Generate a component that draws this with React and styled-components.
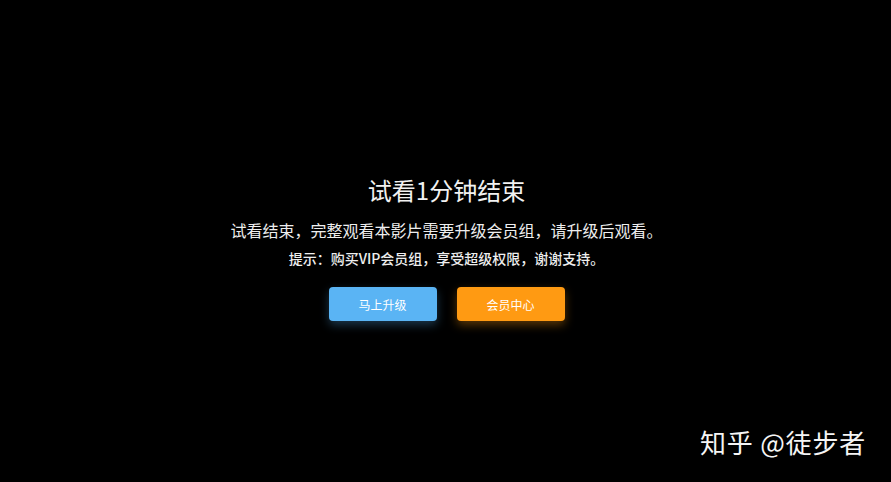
import React from "react";
import styled, { createGlobalStyle } from "styled-components";

const GlobalStyle = createGlobalStyle`
  html, body {
    margin: 0;
    padding: 0;
    background: #000;
  }
  body {
    font-family: "Noto Sans CJK SC", "Noto Sans", sans-serif;
  }
`;

const Screen = styled.div`
  position: relative;
  width: 891px;
  height: 482px;
  background: #000;
  overflow: hidden;
  display: flex;
  flex-direction: column;
  align-items: center;
  padding-top: 173px;
  padding-left: 2px;
  box-sizing: border-box;
`;

const Title = styled.h1`
  margin: 0;
  font-size: 24px;
  line-height: 34px;
  font-weight: 400;
  color: #f2f2f2;
`;

const Message = styled.p`
  margin: 11px 0 0;
  font-size: 16px;
  line-height: 24px;
  color: #eeeeee;
`;

const Hint = styled.p`
  margin: 6px 0 0;
  font-size: 14px;
  line-height: 20px;
  font-weight: 500;
  color: #eeeeee;
`;

const Buttons = styled.div`
  display: flex;
  gap: 20px;
  margin-top: 19px;
`;

const Button = styled.button`
  width: 108px;
  height: 34px;
  border: none;
  border-radius: 4px;
  font-family: inherit;
  font-size: 12px;
  color: #fff;
  cursor: pointer;
  background: ${(p) => (p.$variant === "orange" ? "#ff9a12" : "#5ab4f4")};
  box-shadow: 0 4px 10px
    ${(p) =>
      p.$variant === "orange"
        ? "rgba(255, 154, 18, 0.35)"
        : "rgba(90, 180, 244, 0.3)"};
`;

const Watermark = styled.div`
  position: absolute;
  right: 25px;
  bottom: 22px;
  font-size: 26px;
  line-height: 36px;
  font-weight: 400;
  color: #f5f5f5;
  letter-spacing: 0.8px;
`;

export default function App() {
  return (
    <>
      <GlobalStyle />
      <Screen>
        <Title>试看1分钟结束</Title>
        <Message>试看结束，完整观看本影片需要升级会员组，请升级后观看。</Message>
        <Hint>提示：购买VIP会员组，享受超级权限，谢谢支持。</Hint>
        <Buttons>
          <Button>马上升级</Button>
          <Button $variant="orange">会员中心</Button>
        </Buttons>
        <Watermark>知乎 @徒步者</Watermark>
      </Screen>
    </>
  );
}
